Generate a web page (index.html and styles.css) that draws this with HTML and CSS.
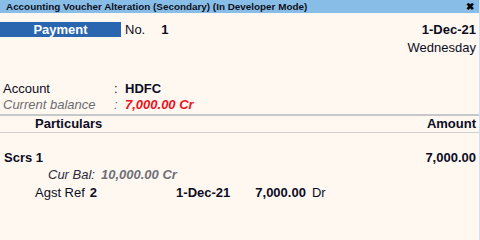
FILE: index.html
```html
<!DOCTYPE html>
<html>
<head>
<meta charset="utf-8">
<link rel="stylesheet" href="styles.css">
</head>
<body>
<div class="win">
  <div class="titlebar">
    <span class="title">Accounting Voucher Alteration (Secondary) (In Developer Mode)</span>
    <span class="close">&#x2716;</span>
  </div>
  <div class="head">
    <div class="head-left">
      <div class="vtype">Payment</div>
      <span class="no-label">No.</span>
      <span class="no-val">1</span>
    </div>
    <div class="head-right">
      <div class="date">1-Dec-21</div>
      <div class="day">Wednesday</div>
    </div>
  </div>
  <div class="acct">
    <div class="row"><span class="lbl">Account</span><span class="colon">:</span><span class="val bold">HDFC</span></div>
    <div class="row muted"><span class="lbl">Current balance</span><span class="colon">:</span><span class="val red">7,000.00 Cr</span></div>
  </div>
  <div class="colhead">
    <span class="part">Particulars</span>
    <span class="amt">Amount</span>
  </div>
  <div class="entry">
    <div class="ledger"><span class="bold">Scrs 1</span><span class="bold amtval">7,000.00</span></div>
    <div class="curbal"><span>Cur Bal:</span><span class="cbv">10,000.00 Cr</span></div>
    <div class="bill">
      <span class="agst">Agst Ref</span>
      <span class="bold refno">2</span>
      <span class="bold bdate">1-Dec-21</span>
      <span class="bold bamt">7,000.00</span>
      <span class="drcr">Dr</span>
    </div>
  </div>
</div>
</body>
</html>
```
FILE: styles.css
```css
html, body {
  margin: 0;
  padding: 0;
  background: #fef8f1;
}
body {
  font-family: "Liberation Sans", Arial, sans-serif;
  font-size: 13px;
  color: #0c0c24;
}
.win {
  width: 479px;
  height: 240px;
  border-right: 1px solid #cfe0f2;
  background: #fef8f1;
}
.titlebar {
  height: 13px;
  background: #88bde7;
  display: flex;
  justify-content: space-between;
  align-items: center;
  padding: 0 5px 0 6px;
  font-size: 9.9px;
  font-weight: bold;
  color: #101020;
  line-height: 13px;
}
.close {
  font-size: 10px;
  color: #000;
}
.head {
  display: flex;
  justify-content: space-between;
  padding-top: 9px;
}
.head-left {
  display: flex;
  align-items: center;
  height: 15px;
}
.vtype {
  width: 121px;
  height: 15px;
  background: #2a66b0;
  color: #fff;
  font-weight: bold;
  text-align: center;
  line-height: 15px;
  font-size: 13px;
}
.no-label {
  margin-left: 4px;
}
.no-val {
  margin-left: 16px;
  font-weight: bold;
}
.head-right {
  text-align: right;
  padding-right: 3px;
  line-height: 18px;
  margin-top: -1px;
}
.date {
  font-weight: bold;
}
.acct {
  margin-top: 24px;
  padding-left: 3px;
}
.row {
  display: flex;
  line-height: 16px;
}
.lbl {
  width: 111px;
}
.colon {
  width: 11px;
}
.muted {
  color: #6c6c70;
  font-style: italic;
}
.bold {
  font-weight: bold;
}
.red {
  color: #f0101a;
  font-weight: bold;
}
.colhead {
  margin-top: 1px;
  border-top: 2px solid #c8c8c8;
  border-bottom: 1px solid #cfcfcf;
  display: flex;
  justify-content: space-between;
  font-weight: bold;
  line-height: 16px;
  padding: 0 3px 0 35px;
}
.entry {
  padding-top: 16px;
}
.ledger {
  display: flex;
  justify-content: space-between;
  padding: 0 3px 0 4px;
  line-height: 18px;
}
.curbal {
  padding-left: 48px;
  font-style: italic;
  color: #2a2a3a;
  line-height: 16px;
}
.cbv {
  margin-left: 6px;
  color: #707078;
  font-weight: bold;
}
.bill {
  display: flex;
  padding-left: 35px;
  line-height: 18px;
  margin-top: 1px;
}
.refno {
  margin-left: 5px;
}
.bdate {
  margin-left: 79px;
}
.bamt {
  margin-left: 25px;
}
.drcr {
  margin-left: 6px;
}
```
